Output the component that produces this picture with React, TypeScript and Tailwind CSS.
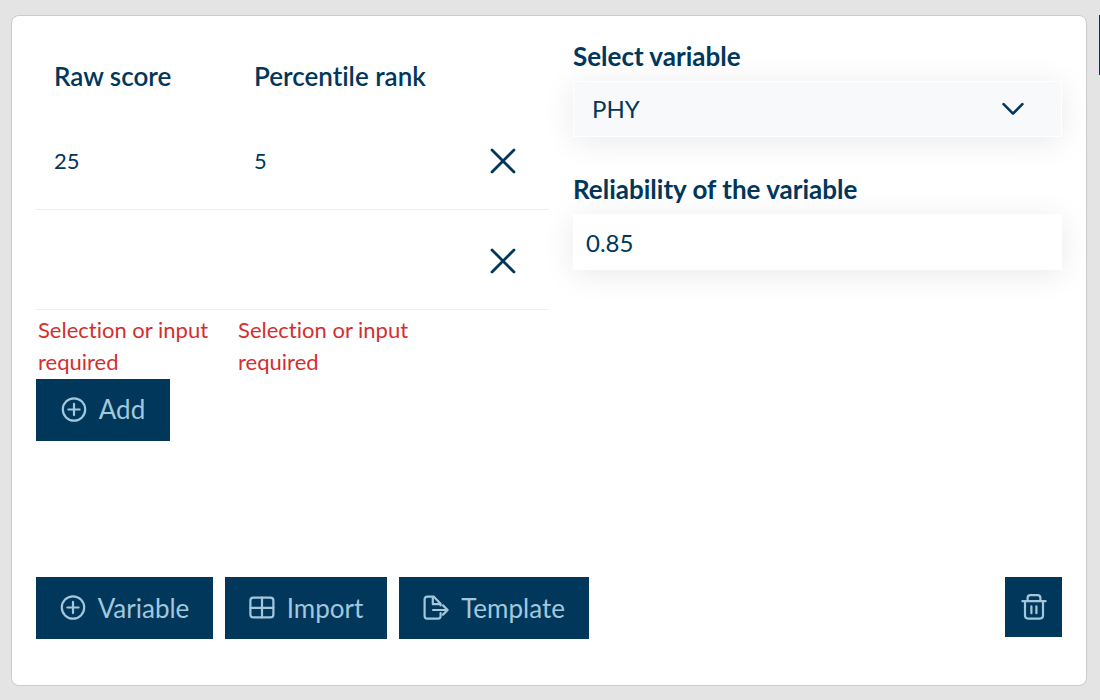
import { useState, type ReactNode } from "react";

type Row = { id: number; raw: string; rank: string };

const initialRows: Row[] = [
  { id: 1, raw: "25", rank: "5" },
  { id: 2, raw: "", rank: "" },
];

function Icon({ children }: { children: ReactNode }) {
  return (
    <svg
      viewBox="0 0 26 26"
      className="size-[26px] shrink-0"
      fill="none"
      stroke="currentColor"
      strokeWidth="2.2"
      strokeLinecap="round"
      strokeLinejoin="round"
      aria-hidden="true"
    >
      {children}
    </svg>
  );
}

function PlusCircle() {
  return (
    <Icon>
      <circle cx="13" cy="12.5" r="11.2" />
      <path d="M13 6.9v11.2M7.4 12.5h11.2" />
    </Icon>
  );
}

function TableIcon() {
  return (
    <Icon>
      <rect x="1.4" y="2.6" width="23" height="19.8" rx="3" />
      <path d="M13 2.6v19.8M1.4 12.8h23" />
    </Icon>
  );
}

function FileExport() {
  return (
    <Icon>
      <path d="M17.6 18v3a2.6 2.6 0 0 1-2.6 2.6H4.2a2.6 2.6 0 0 1-2.6-2.6V4.2a2.6 2.6 0 0 1 2.6-2.6h6.4l7 7.2v1.6" />
      <path d="M9.8 2v7.2H17" />
      <path d="M10 15h14.6M20 10.4l4.6 4.6-4.6 4.6" />
    </Icon>
  );
}

function Trash() {
  return (
    <Icon>
      <path d="M1.4 7.2h23.2M6.6 7.2V4a2.8 2.8 0 0 1 2.8-2.8h7.2A2.8 2.8 0 0 1 19.4 4v3.2" />
      <path d="M4 7.2v14.4a3 3 0 0 0 3 3h12a3 3 0 0 0 3-3V7.2" />
      <path d="M10.4 12.4v6.8M15.4 12.4v6.8" />
    </Icon>
  );
}

const buttonClass =
  "flex h-[62px] items-center justify-center gap-3 bg-[#00375b] text-[26px] text-[#a3c7dc]";

const fieldClass =
  "h-14 w-full rounded-none border border-white text-2xl text-[#00375b] shadow-[0_4px_32px_rgba(0,0,0,0.09)] outline-none";

export default function App() {
  const [rows, setRows] = useState(initialRows);
  const [reliability, setReliability] = useState("0.85");

  return (
    <div className="grid min-h-screen grid-cols-[minmax(0,1fr)_1px] gap-x-3 bg-[#e4e4e4] pt-[15px] pb-3.5 pl-[11px] font-[Lato,'Open_Sans',sans-serif] text-[#00375b] [font-variant-ligatures:none]">
      <main className="flex flex-col rounded-lg border border-[#cccccc] bg-white px-6 pt-6 pb-[46px]">
        <div className="grid grid-cols-2">
          <section>
            <table className="w-full table-fixed border-collapse text-left">
              <colgroup>
                <col className="w-[39%]" />
                <col className="w-[39%]" />
                <col />
              </colgroup>
              <thead>
                <tr className="h-[69px] text-[26px]">
                  <th className="pt-1 pl-[18px] font-semibold">Raw score</th>
                  <th className="pt-1 pl-[18px] font-semibold">Percentile rank</th>
                  <th aria-label="Remove" />
                </tr>
              </thead>
              <tbody>
                {rows.map((row) => (
                  <tr key={row.id} className="h-[100px] border-b border-[#eeeeee] text-[22px]">
                    <td className="pt-1 pl-[18px]">{row.raw}</td>
                    <td className="pt-1 pl-[18px]">{row.rank}</td>
                    <td className="pt-1 pl-[54px]">
                      <button
                        type="button"
                        aria-label="Remove row"
                        className="block"
                        onClick={() => setRows(rows.filter((r) => r.id !== row.id))}
                      >
                        <svg
                          viewBox="0 0 26 26"
                          className="size-[26px]"
                          fill="none"
                          stroke="currentColor"
                          strokeWidth="2.8"
                          strokeLinecap="round"
                          aria-hidden="true"
                        >
                          <path d="M2 2l22 22M24 2L2 24" />
                        </svg>
                      </button>
                    </td>
                  </tr>
                ))}
              </tbody>
              <tfoot>
                <tr className="text-[22px] leading-8 text-[#d32f2f]">
                  <td className="pt-1 pb-px pl-0.5">Selection or input required</td>
                  <td className="pt-1 pb-px pl-0.5">Selection or input required</td>
                  <td />
                </tr>
              </tfoot>
            </table>
            <button
              type="button"
              className={`${buttonClass} w-[134px]`}
              onClick={() => setRows([...rows, { id: Date.now(), raw: "", rank: "" }])}
            >
              <PlusCircle />
              Add
            </button>
          </section>

          <section className="flex flex-col pl-6">
            <label htmlFor="variable" className="pb-[9px] text-[26px] leading-8 font-bold">
              Select variable
            </label>
            <div className="relative">
              <select
                id="variable"
                className={`${fieldClass} appearance-none bg-[#f8f9fb] px-[18px]`}
              >
                <option>PHY</option>
              </select>
              <svg
                viewBox="0 0 24 24"
                className="pointer-events-none absolute top-4 right-[37px] size-6"
                fill="none"
                stroke="currentColor"
                strokeWidth="2.6"
                strokeLinecap="round"
                strokeLinejoin="round"
                aria-hidden="true"
              >
                <path d="M2.6 7.2l9.4 9.4 9.4-9.4" />
              </svg>
            </div>
            <label htmlFor="reliability" className="pt-9 pb-[9px] text-[26px] leading-8 font-bold">
              Reliability of the variable
            </label>
            <input
              id="reliability"
              type="text"
              inputMode="decimal"
              value={reliability}
              onChange={(e) => setReliability(e.target.value)}
              className={`${fieldClass} bg-white px-3`}
            />
          </section>
        </div>

        <div className="mt-auto flex items-start gap-3">
          <button type="button" className={`${buttonClass} w-[177px]`}>
            <PlusCircle />
            Variable
          </button>
          <button type="button" className={`${buttonClass} w-[162px]`}>
            <TableIcon />
            Import
          </button>
          <button type="button" className={`${buttonClass} w-[190px]`}>
            <FileExport />
            Template
          </button>
          <button
            type="button"
            aria-label="Delete"
            className="ml-auto flex h-[60px] w-[57px] items-center justify-center bg-[#00375b] text-[#a3c7dc]"
          >
            <Trash />
          </button>
        </div>
      </main>
      <aside className="h-[60px] bg-[#00375b]" />
    </div>
  );
}
